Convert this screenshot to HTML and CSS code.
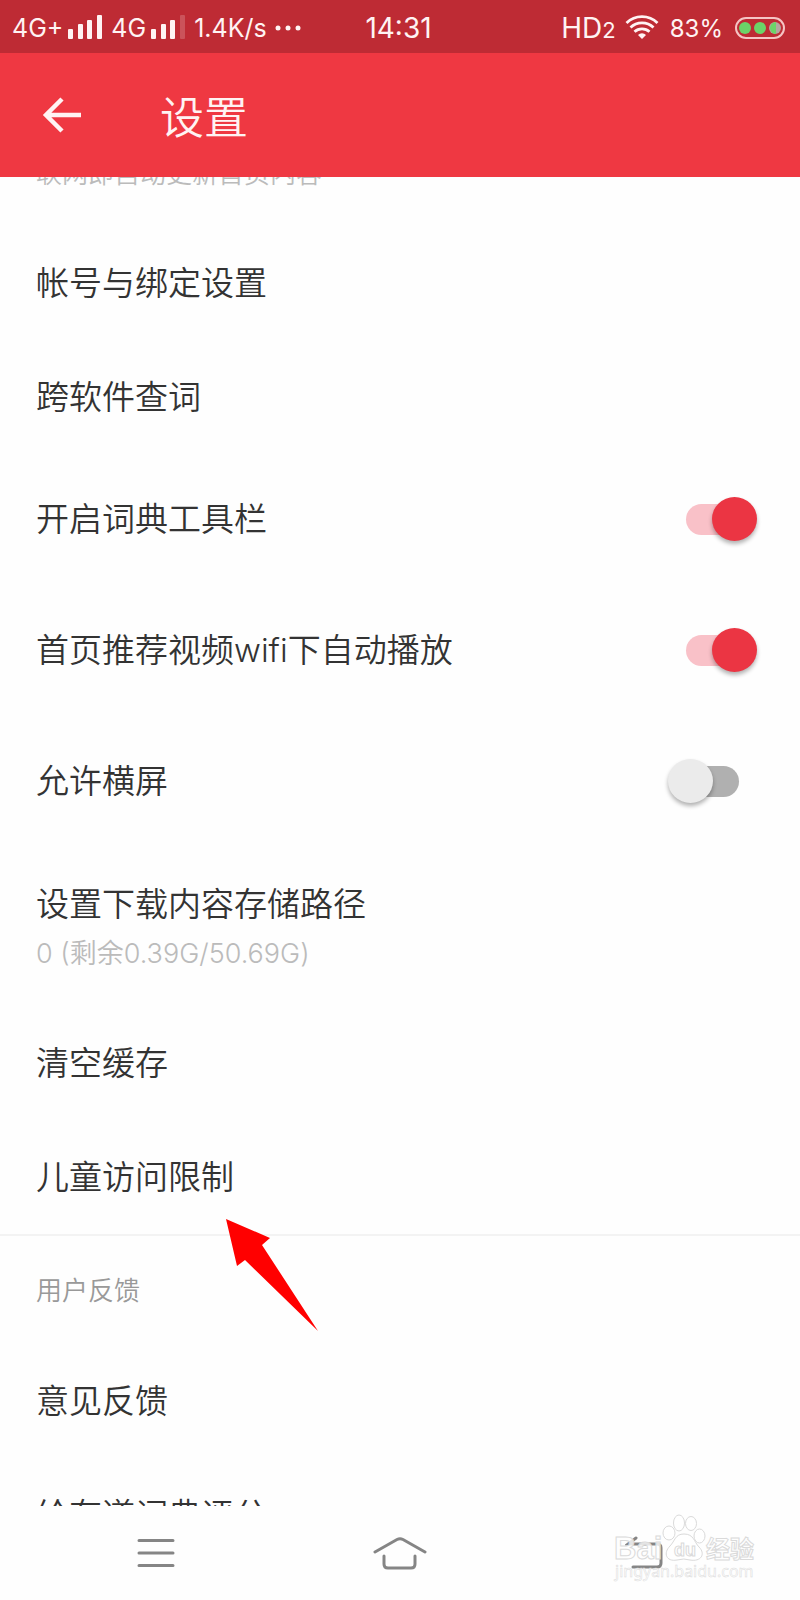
FILE: index.html
```html
<!DOCTYPE html>
<html lang="zh-CN">
<head>
    <meta charset="UTF-8">
    <meta name="viewport" content="width=device-width, initial-scale=1.0">
    <title>设置</title>
    <link rel="stylesheet" href="styles.css">
</head>
<body>
    <div class="status-bar">
        <div class="status-left">
            <span>4G+</span>
            <svg class="signal" width="36" height="24" viewBox="0 0 36 24" fill="#fff3f3">
                <rect x="1" y="14" width="5" height="10" rx="1"/>
                <rect x="11" y="9" width="5" height="15" rx="1"/>
                <rect x="20" y="5" width="5" height="19" rx="1"/>
                <rect x="30" y="0" width="5" height="24" rx="1"/>
            </svg>
            <span class="sim2">4G</span>
            <svg class="signal" width="36" height="24" viewBox="0 0 36 24" fill="#fff3f3">
                <rect x="1" y="14" width="5" height="10" rx="1"/>
                <rect x="11" y="9" width="5" height="15" rx="1"/>
                <rect x="20" y="5" width="5" height="19" rx="1"/>
                <rect x="30" y="0" width="5" height="24" rx="1" opacity="0.2"/>
            </svg>
            <span class="speed">1.4K/s</span>
            <svg class="dots" width="26" height="24" viewBox="0 0 26 24" fill="#fff3f3">
                <circle cx="3" cy="12" r="2.5"/>
                <circle cx="13" cy="12" r="2.5"/>
                <circle cx="23" cy="12" r="2.5"/>
            </svg>
        </div>
        <div class="clock">14:31</div>
        <div class="status-right">
            <span class="hd">HD<small>2</small></span>
            <svg class="wifi" width="34" height="24" viewBox="0 0 34 24" fill="none" stroke="#fff3f3" stroke-width="2.8">
                <path d="M1.500 8A22 22 0 0 1 32.500 8"/>
                <path d="M5.500 12.500A16.500 16.500 0 0 1 28.500 12.500"/>
                <path d="M9.500 16.800A11 11 0 0 1 24.500 16.800"/>
                <path d="M13 20A5.500 5.500 0 0 1 21 20L17 24Z" fill="#fff3f3" stroke="none"/>
            </svg>
            <span>83%</span>
            <svg class="battery" width="50" height="22" viewBox="0 0 50 22">
                <rect x="1" y="1" width="48" height="20" rx="10" fill="none" stroke="#f5c4c4" stroke-width="2"/>
                <circle cx="10" cy="11" r="6" fill="#6bd468"/>
                <circle cx="25" cy="11" r="6" fill="#6bd468"/>
                <circle cx="40" cy="11" r="6" fill="#b5a5a0"/>
                <path d="M41 5A6 6 0 1 0 41 17Z" fill="#6bd468"/>
            </svg>
        </div>
    </div>

    <header class="app-bar">
        <button class="back" aria-label="返回">
            <svg width="40" height="36" viewBox="0 0 40 36" fill="none" stroke="#fff3f3" stroke-width="4.500">
                <path d="M39 18H4M20 2L4 18L20 34"/>
            </svg>
        </button>
        <h1>设置</h1>
    </header>

    <main class="list">
        <p class="note">联网即自动更新首页内容</p>
        <div class="row">帐号与绑定设置</div>
        <div class="row">跨软件查词</div>
        <div class="row row-switch">
            <label for="toolbar">开启词典工具栏</label>
            <input class="switch" type="checkbox" id="toolbar" checked>
        </div>
        <div class="row row-switch">
            <label for="autoplay">首页推荐视频wifi下自动播放</label>
            <input class="switch" type="checkbox" id="autoplay" checked>
        </div>
        <div class="row row-switch">
            <label for="landscape">允许横屏</label>
            <input class="switch" type="checkbox" id="landscape">
        </div>
        <div class="row row-double">
            <span>设置下载内容存储路径</span>
            <span class="sub">0 (剩余0.39G/50.69G)</span>
        </div>
        <div class="row">清空缓存</div>
        <div class="row row-marked">
            儿童访问限制
            <svg class="pointer" width="92" height="112" viewBox="0 0 92 112">
                <path d="M0 0L44 19L36 26L92 112L19 41L11 47Z" fill="#f00"/>
            </svg>
        </div>
        <h2>用户反馈</h2>
        <div class="row">意见反馈</div>
        <div class="row">给有道词典评分</div>
    </main>

    <nav class="nav-bar">
        <button aria-label="菜单">
            <svg width="38" height="30" viewBox="0 0 38 30" fill="none" stroke="#858585" stroke-width="3" stroke-linecap="round">
                <path d="M2 2.500H36M2 15H36M2 27.500H36"/>
            </svg>
        </button>
        <button aria-label="主页">
            <svg width="54" height="34" viewBox="0 0 54 34" fill="none" stroke="#858585" stroke-width="3" stroke-linecap="round">
                <path d="M2 16L24 3.500Q27 2 30 3.500L52 16"/>
                <path d="M11 20V28Q11 32 15 32H38Q42 32 42 28V20"/>
            </svg>
        </button>
        <button aria-label="返回">
            <svg width="38" height="34" viewBox="0 0 38 34" fill="none" stroke="#858585" stroke-width="3" stroke-linecap="round">
                <path d="M11 2L3 8H32Q36 8 36 12V27Q36 31 32 31H8"/>
            </svg>
        </button>
        <svg class="watermark" width="144" height="72" viewBox="0 0 144 72">
            <g fill="#fff" fill-opacity="0.8" stroke="#dadada">
                <text class="wm-logo" x="0" y="45">Bai</text>
                <ellipse cx="55" cy="19" rx="6" ry="7"/>
                <ellipse cx="65" cy="9" rx="5.500" ry="8"/>
                <ellipse cx="77" cy="9.500" rx="5.500" ry="7"/>
                <ellipse cx="85.500" cy="22" rx="5.500" ry="7"/>
                <path d="M70 20C80 20 80 28 85 33C92 40 87 48 76 46Q70 44 63 46C52 48 49 39 56 32C61 27 61 20 70 20Z"/>
                <text class="wm-du" x="60" y="42">du</text>
                <text class="wm-cn" x="92" y="44">经验</text>
                <text class="wm-url" x="1" y="63">jingyan.baidu.com</text>
            </g>
        </svg>
    </nav>
</body>
</html>
```
FILE: styles.css
```css
* {
    box-sizing: border-box;
}

body {
    margin: 0;
    height: 100vh;
    display: flex;
    flex-direction: column;
    overflow: hidden;
    background: #fefefe;
    color: #333;
    font-family: Inter, "Noto Sans CJK SC", sans-serif;
    font-weight: 350;
}

button {
    padding: 0;
    border: none;
    background: none;
    cursor: pointer;
}

svg {
    display: block;
}

/* status bar */
.status-bar {
    flex: none;
    display: grid;
    grid-template-columns: 1fr auto 1fr;
    align-items: center;
    height: 53px;
    padding: 3px 15px 0 12px;
    background: #be2b34;
    color: #fff3f3;
    font-size: 25px;
    font-weight: 400;
    white-space: nowrap;
}

.status-left,
.status-right {
    display: flex;
    align-items: center;
}

.status-right {
    justify-content: flex-end;
    font-size: 24px;
}

.signal {
    margin: 0 0 3px 4px;
}

.sim2,
.speed {
    margin-left: 8px;
}

.dots {
    margin-left: 8px;
}

.clock,
.hd {
    font-size: 28px;
}

.hd small {
    font-size: 22px;
}

.wifi {
    margin: 0 11px 2px 9px;
}

.battery {
    margin-left: 12px;
}

/* title bar */
.app-bar {
    position: relative;
    z-index: 1;
    flex: none;
    display: flex;
    align-items: center;
    gap: 78px;
    height: 124px;
    padding: 0 42px;
    background: #ef3842;
    color: #fff3f3;
}

.app-bar h1 {
    margin: 0;
    font-size: 44px;
    font-weight: 350;
}

/* settings list */
.list {
    flex: 1;
    min-height: 0;
    overflow: hidden;
}

.note {
    height: 68px;
    margin: -19px 0 0;
    padding: 0 36px;
    color: #bbb;
    font-size: 26px;
    line-height: 32px;
}

.row {
    display: flex;
    align-items: center;
    min-height: 114px;
    padding: 0 36px;
    font-size: 33px;
    line-height: 48px;
}

.row-switch {
    justify-content: space-between;
    min-height: 131px;
    padding: 0 43px 2px 36px;
}

.row-double {
    flex-direction: column;
    align-items: flex-start;
    justify-content: center;
    gap: 2px;
    min-height: 159px;
    padding-top: 5px;
}

.sub {
    color: #bbb;
    font-size: 27px;
}

.row-marked {
    position: relative;
}

.pointer {
    position: absolute;
    z-index: 1;
    top: 99px;
    left: 226px;
}

.list h2 {
    margin: 0;
    padding: 32px 36px 30px;
    border-top: 2px solid #f3f3f3;
    color: #999;
    font-size: 26px;
    font-weight: 350;
    line-height: 46px;
}

/* switches */
.switch {
    position: relative;
    flex: none;
    appearance: none;
    width: 89px;
    height: 44px;
    margin: 0;
    cursor: pointer;
}

.switch::before {
    content: "";
    position: absolute;
    inset: 7px 18px 6px;
    border-radius: 16px;
    background: #b0b0b0;
}

.switch::after {
    content: "";
    position: absolute;
    top: 0;
    left: 0;
    width: 45px;
    height: 44px;
    border-radius: 50%;
    background: #ebebeb;
    box-shadow: 0 3px 4px rgba(0, 0, 0, 0.3);
}

.switch:checked::before {
    background: #f9c1c8;
}

.switch:checked::after {
    left: 44px;
    background: #eb3543;
}

/* system navigation */
.nav-bar {
    position: relative;
    flex: none;
    display: grid;
    grid-template-columns: repeat(3, 1fr);
    height: 94px;
    padding: 0 34px;
    background: #fefefe;
}

.nav-bar button {
    display: flex;
    align-items: center;
    justify-content: center;
}

.watermark {
    position: absolute;
    right: 42px;
    bottom: 14px;
    overflow: visible;
}

.wm-logo,
.wm-du {
    font-family: "Liberation Sans", sans-serif;
    font-weight: bold;
}

.wm-logo {
    font-size: 31px;
}

.wm-du {
    font-size: 18px;
}

.wm-cn {
    font-family: "Noto Sans CJK SC", sans-serif;
    font-size: 24px;
    font-weight: bold;
}

.wm-url {
    font-family: "Noto Sans", sans-serif;
    font-size: 16px;
    font-weight: 400;
    stroke-width: 0.5px;
}
```
